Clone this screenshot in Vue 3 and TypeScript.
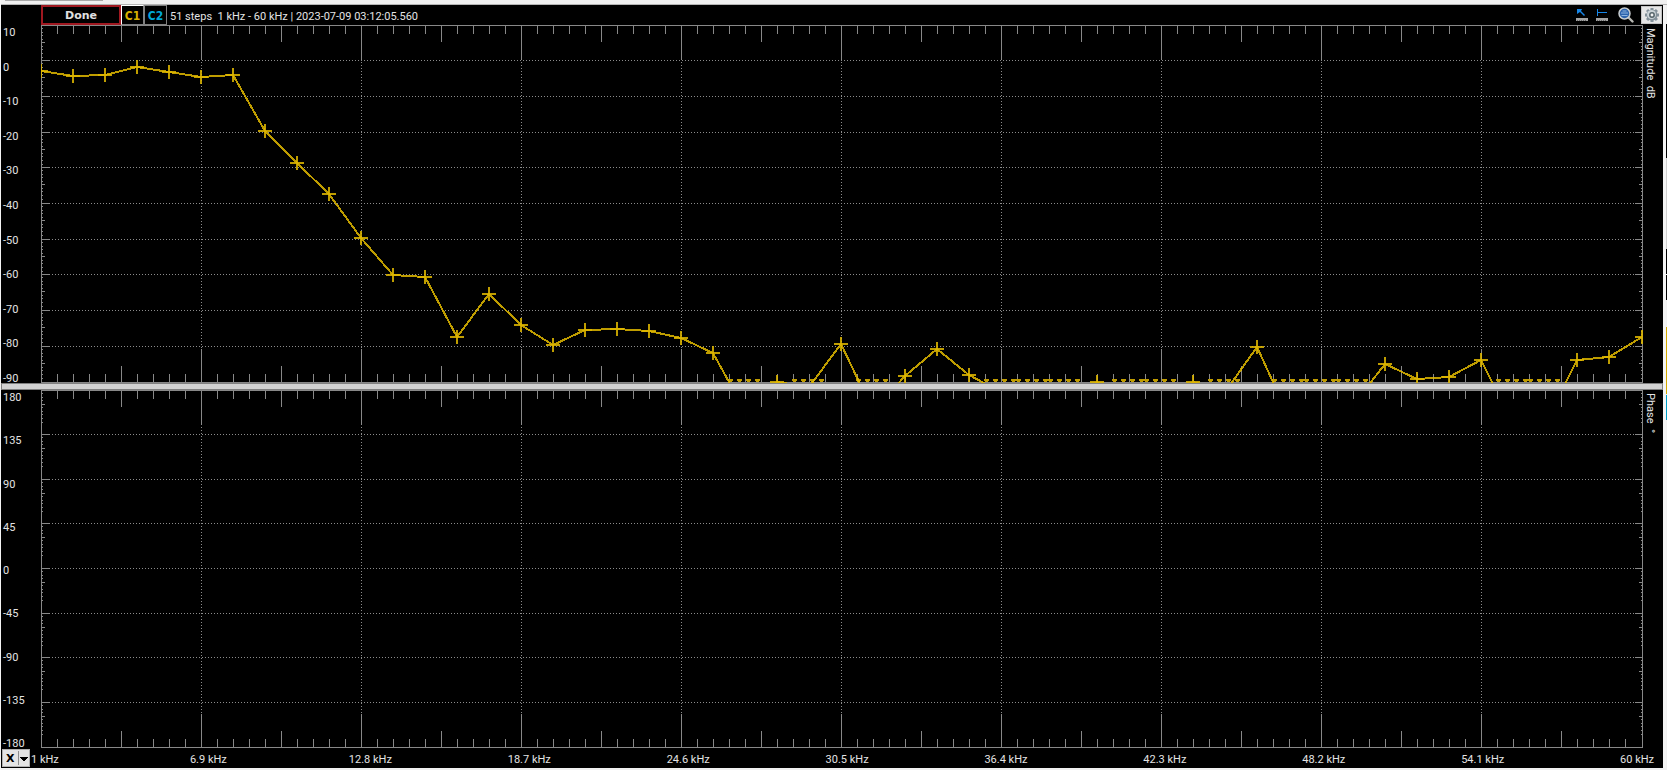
<script setup lang="ts">
import { computed, onBeforeUnmount, onMounted, ref } from 'vue'

interface Segment { x1: number; y1: number; x2: number; y2: number }

const magnitudeLabels = ['10', '0', '-10', '-20', '-30', '-40', '-50', '-60', '-70', '-80', '-90']
const phaseLabels = ['180', '135', '90', '45', '0', '-45', '-90', '-135', '-180']
const frequencyLabels = ['1 kHz', '6.9 kHz', '12.8 kHz', '18.7 kHz', '24.6 kHz', '30.5 kHz', '36.4 kHz', '42.3 kHz', '48.2 kHz', '54.1 kHz', '60 kHz']

const samples = [
  -2.9, -4.3, -4, -1.8, -3.2, -4.6, -4, -19.7, -28.7, -37.3,
  -49.7, -60, -60.6, -77.4, -65.4, -74, -79.6, -75.4, -75.2, -75.7,
  -77.7, -81.9, -98.1, -90, -91.4, -79.4, -98.1, -88.3, -80.8, -88,
  -92.8, -99, -99, -90, -99, -99, -90, -92.8, -80.2, -99.8,
  -99, -96.4, -85, -89.2, -88.6, -83.8, -101.8, -101.8, -83.8, -83,
  -77.4,
]
const maxDb = 10
const minDb = -90

const topPlot = ref<HTMLElement | null>(null)
const width = ref(1602)
const height = ref(358)
let observer: ResizeObserver | undefined

function measure() {
  if (!topPlot.value) return
  width.value = Math.round(topPlot.value.clientWidth)
  height.value = Math.round(topPlot.value.clientHeight)
}

onMounted(() => {
  measure()
  observer = new ResizeObserver(measure)
  if (topPlot.value) observer.observe(topPlot.value)
})
onBeforeUnmount(() => observer?.disconnect())

const right = computed(() => width.value - 1)
const bottom = computed(() => height.value - 1)

const verticalMajors = computed(() =>
  Array.from({ length: 9 }, (_, i) => Math.floor(((i + 1) * right.value) / 10)))

function horizontalMajors(count: number) {
  return Array.from({ length: count - 1 }, (_, i) => Math.floor(((i + 1) * bottom.value) / count))
}

function ticks(divisions: number, perDivision: number, midTick: number, lastTick: number) {
  const list: Segment[] = []
  for (let i = 1; i < 100; i++) {
    const x = Math.floor((i * right.value) / 100)
    const length = i % 10 === 0 ? 34 : i % 5 === 0 ? 17 : 9
    list.push({ x1: x, y1: 0, x2: x + 1, y2: length })
    list.push({ x1: x, y1: height.value - length, x2: x + 1, y2: height.value })
  }
  for (let d = 0; d < divisions; d++) {
    const start = Math.floor((d * bottom.value) / divisions)
    for (let k = 0; k <= lastTick; k++) {
      if (d === 0 && k === 0) continue
      const y = start + Math.floor((k * bottom.value) / perDivision)
      const length = k === 0 ? 8 : k === midTick ? 4 : 2
      list.push({ x1: 0, y1: y, x2: length, y2: y + 1 })
      list.push({ x1: width.value - length, y1: y, x2: width.value, y2: y + 1 })
    }
  }
  return list.map(s => `M${s.x1} ${s.y1}H${s.x2}V${s.y2}H${s.x1}Z`).join('')
}

const plots = computed(() => [
  { rows: horizontalMajors(10), ticks: ticks(10, 100, 5, 9) },
  { rows: horizontalMajors(8), ticks: ticks(8, 100, 4, 9) },
])

const points = computed(() => samples.map((db, i) => ({
  x: Math.floor((i * right.value) / (samples.length - 1)),
  y: Math.round(((maxDb - db) / (maxDb - minDb)) * bottom.value),
  below: db < minDb,
})))
const trace = computed(() => points.value.map(p => `${p.x},${p.y}`).join(' '))
const markers = computed(() => points.value.filter(p => !p.below)
  .map(p => `M${p.x - 7} ${p.y}h14M${p.x} ${p.y - 7}v14`).join(''))
const underRange = computed(() => points.value.filter(p => p.below)
  .map(p => [-17, -8, 1, 10].map(o => `M${p.x + o} ${bottom.value - 3}h5v2h-1v1h-3v-1h-1z`).join('')).join(''))

const axis = ref('X')
</script>

<template>
  <main class="analyzer">
    <div class="edge-top"></div>
    <header class="toolbar">
      <button class="state" type="button">Done</button>
      <button class="channel c1" type="button">C1</button>
      <button class="channel c2" type="button">C2</button>
      <span class="info">51 steps&nbsp; 1 kHz - 60 kHz | 2023-07-09 03:12:05.560</span>
      <div class="tools">
        <button class="tool" type="button" aria-label="Cursor">
          <svg width="12" height="13" viewBox="0 0 12 13">
            <path d="M1 0h5L5 2l4 4-1 1-4-4-3 2z" fill="#1686e8" />
            <path d="M0 9h12v3H0z" fill="#a4a4a4" />
            <path d="M1 11h1v1H1zM3 11h1v1H3zM5 11h1v1H5zM7 11h1v1H7zM9 11h1v1H9z" fill="#696969" />
          </svg>
        </button>
        <button class="tool" type="button" aria-label="Ruler">
          <svg width="12" height="13" viewBox="0 0 12 13">
            <path d="M1 0h1v3h9v1H2v3H1z" fill="#1686e8" />
            <path d="M0 9h12v3H0z" fill="#a4a4a4" />
            <path d="M1 11h1v1H1zM3 11h1v1H3zM5 11h1v1H5zM7 11h1v1H7zM9 11h1v1H9z" fill="#696969" />
          </svg>
        </button>
        <button class="tool zoom" type="button" aria-label="Zoom">
          <svg width="16" height="16" viewBox="0 0 16 16">
            <path d="M10.500 10.500l4 4" stroke="#b9b9b4" stroke-width="2.400" stroke-linecap="round" />
            <circle cx="6.500" cy="6.500" r="5.500" fill="#2b62ac" stroke="#c8cdd0" stroke-width="1.500" />
            <path d="M3 6h7M3.500 8.500h6M4.500 4h4" stroke="#8db5e2" stroke-width="1" />
          </svg>
        </button>
        <button class="gear" type="button" aria-label="Settings">
          <svg width="16" height="16" viewBox="0 0 16 16">
            <g fill="#84919a">
              <circle cx="8" cy="8" r="5.500" />
              <path d="M6.500 1h3v14h-3zM1 6.500h14v3H1z" />
              <path d="M6.500 1h3v14h-3zM1 6.500h14v3H1z" transform="rotate(45 8 8)" />
            </g>
            <circle cx="7.500" cy="7.500" r="4.500" fill="#ccd4d8" />
            <circle cx="8" cy="8" r="2.200" fill="#f3f3f3" stroke="#55646a" stroke-width="1.500" />
          </svg>
        </button>
      </div>
    </header>

    <section class="chart" aria-label="Magnitude">
      <div class="scale"><span v-for="l in magnitudeLabels" :key="l">{{ l }}</span></div>
      <div ref="topPlot" class="plot">
        <svg :width="width" :height="height" shape-rendering="crispEdges">
          <g class="grid">
            <line v-for="x in verticalMajors" :key="'x' + x" :x1="x + 0.5" :x2="x + 0.5" y1="34" :y2="height - 34" />
            <line v-for="y in plots[0].rows" :key="'y' + y" x1="8" :x2="width - 8" :y1="y + 0.5" :y2="y + 0.5" />
          </g>
          <path class="ticks" :d="plots[0].ticks" />
          <rect class="frame" x="0.5" y="0.5" :width="right" :height="bottom" />
          <path class="under" :d="underRange" />
          <polyline class="trace" :points="trace" />
          <path class="trace" :d="markers" />
        </svg>
      </div>
      <div class="title">Magnitude&nbsp; dB</div>
    </section>

    <div class="splitter" role="separator"></div>

    <section class="chart" aria-label="Phase">
      <div class="scale"><span v-for="l in phaseLabels" :key="l">{{ l }}</span></div>
      <div class="plot">
        <svg :width="width" :height="height" shape-rendering="crispEdges">
          <g class="grid">
            <line v-for="x in verticalMajors" :key="'x' + x" :x1="x + 0.5" :x2="x + 0.5" y1="34" :y2="height - 34" />
            <line v-for="y in plots[1].rows" :key="'y' + y" x1="8" :x2="width - 8" :y1="y + 0.5" :y2="y + 0.5" />
          </g>
          <path class="ticks" :d="plots[1].ticks" />
          <rect class="frame" x="0.5" y="0.5" :width="right" :height="bottom" />
        </svg>
      </div>
      <div class="title">Phase&nbsp; °</div>
    </section>

    <footer class="bottom-axis">
      <div class="axis-picker">
        <select v-model="axis" aria-label="Axis">
          <option>X</option>
          <option>Y</option>
        </select>
        <svg class="caret" width="11" height="16" viewBox="0 0 11 16" shape-rendering="crispEdges">
          <path d="M0 1h1v14H0z" fill="#8c8c8c" />
          <path d="M2 7h8v1H9v1H8v1H7v1H5v-1H4V9H3V8H2z" fill="#000" />
        </svg>
      </div>
      <div class="frequencies"><span v-for="l in frequencyLabels" :key="l">{{ l }}</span></div>
    </footer>
    <div class="edge-bottom"></div>
    <div class="edge-right"></div>
  </main>
</template>

<style>
body { margin: 0; background: #f0f0f0; }
</style>

<style scoped>
.analyzer {
  display: grid;
  grid-template-columns: minmax(0, 1fr) 4px;
  grid-template-rows: 5px 20px minmax(0, 1fr) 7px minmax(0, 1fr) 20px 2px;
  height: 100vh;
  box-sizing: border-box;
  border-left: 1px solid #f4f4f4;
  background: #000;
  color: #e4e4e4;
  font: 11px/14px Roboto, sans-serif;
}
button, select { margin: 0; padding: 0; border-radius: 0; font: inherit; }
.analyzer > * { grid-column: 1; }
.analyzer > .edge-top {
  grid-column: 1 / -1;
  background: linear-gradient(#a8a8a8, #a8a8a8) 4px 0 / 98px 1px no-repeat, #f0f0f0;
  border-bottom: 1px solid #b4b4b4;
  box-sizing: border-box;
}
.analyzer > .edge-bottom { grid-column: 1 / -1; background: #f0f0f0; }
.analyzer > .edge-right {
  grid-column: 2;
  grid-row: 2 / 7;
  background: linear-gradient(#f0f0f0 19px, #000 19px 153px, #d0d0d0 153px 244px, #000 244px 269px, #fff 269px 270px, #000 270px 295px, #f0f0f0 295px 322px, #d4aa00 322px 389px, #f0f0f0 389px 390px, #009fc8 390px 415px, #f0f0f0 415px) right / 1px 100% no-repeat, #f4f4f4;
}
.toolbar { display: flex; padding-left: 40px; align-items: stretch; }
.state {
  width: 80px;
  padding-top: 2px;
  border: 2px solid #a01820;
  background: #000;
  color: #e0e0e0;
  font: bold 11px/14px "DejaVu Sans", sans-serif;
}
.channel {
  width: 23px;
  padding-top: 2px;
  border: 1px solid #808080;
  background: #000;
  font: bold 12px/14px "DejaVu Sans Condensed", "DejaVu Sans", sans-serif;
}
.c1 { color: #d8b000; border-top-color: #fff; border-left-color: #fff; }
.c2 { color: #00a8d8; }
.info { padding: 5px 0 0 3px; white-space: pre; }
.tools { display: flex; align-items: center; margin-left: auto; }
.tool { display: flex; width: 20px; border: 0; background: none; }
.tool.zoom { width: 25px; padding-left: 2px; }
.gear {
  display: flex;
  align-items: center;
  justify-content: center;
  width: 21px;
  height: 18px;
  margin-right: 1px;
  border: 1px solid #c4c4c4;
  background: #e6e6e6;
}
.chart { display: grid; grid-template-columns: 40px minmax(0, 1fr) 20px; min-height: 0; }
.scale {
  display: flex;
  flex-direction: column;
  justify-content: space-between;
  margin-bottom: -3px;
  padding: 1px 0 0 2px;
}
.plot { min-width: 0; min-height: 0; overflow: hidden; }
.plot svg { display: block; }
.grid line { stroke: #8c8c8c; stroke-width: 1; stroke-dasharray: 1 2; }
.ticks { fill: #888; }
.frame { fill: none; stroke: #888; }
.trace { fill: none; stroke: #e0b800; stroke-opacity: 0.85; stroke-width: 2; }
.under { fill: #c09c00; }
.title { writing-mode: vertical-rl; line-height: 16px; padding: 3px 5px 0 0; white-space: pre; }
.splitter { border: 1px solid #808080; background: #d2d2d2; box-sizing: border-box; }
.bottom-axis { display: flex; padding: 1px 9px 1px 1px; }
.axis-picker {
  position: relative;
  width: 28px;
  height: 18px;
  flex: none;
}
.axis-picker select {
  appearance: none;
  width: 100%;
  height: 100%;
  padding: 2px 0 0 3px;
  border: 1px solid #b0b0b0;
  background: #e4e4e4;
  color: #000;
  font: bold 11px/14px "DejaVu Sans", sans-serif;
}
.caret { position: absolute; right: 1px; top: 1px; pointer-events: none; }
.frequencies { display: flex; flex: 1; padding-left: 1px; line-height: 22px; white-space: nowrap; }
.frequencies span { flex: 1 1 0; min-width: 0; }
.frequencies span:last-child { flex: none; }
</style>
